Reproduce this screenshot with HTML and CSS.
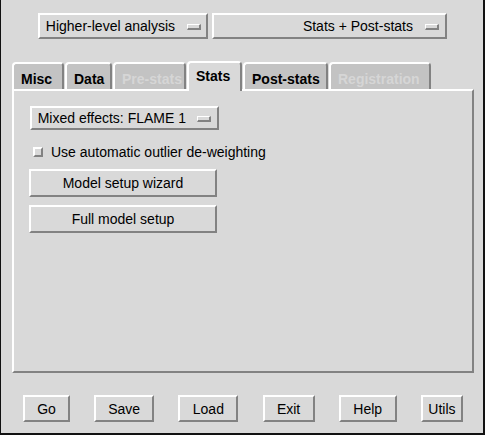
FILE: index.html
```html
<!DOCTYPE html>
<html>
<head>
<meta charset="utf-8">
<link rel="stylesheet" href="styles.css">
</head>
<body>
<div class="window">
  <div class="topbar">
    <div class="menubtn mb-level"><span class="mb-text">Higher-level analysis</span><span class="ind"></span></div>
    <div class="menubtn mb-mode"><span class="mb-text">Stats + Post-stats</span><span class="ind"></span></div>
  </div>
  <div class="tabs">
    <div class="tab t-misc">Misc</div>
    <div class="tab t-data">Data</div>
    <div class="tab t-pre disabled">Pre-stats</div>
    <div class="tab t-stats selected">Stats</div>
    <div class="tab t-post">Post-stats</div>
    <div class="tab t-reg disabled">Registration</div>
  </div>
  <div class="panel">
    <div class="menubtn mb-mixed"><span class="mb-text">Mixed effects: FLAME 1</span><span class="ind"></span></div>
    <div class="check"><span class="box"></span><span class="check-label">Use automatic outlier de-weighting</span></div>
    <div class="btn wide first">Model setup wizard</div>
    <div class="btn wide second">Full model setup</div>
  </div>
  <div class="actions">
    <div class="btn b-go">Go</div>
    <div class="btn b-save">Save</div>
    <div class="btn b-load">Load</div>
    <div class="btn b-exit">Exit</div>
    <div class="btn b-help">Help</div>
    <div class="btn b-utils">Utils</div>
  </div>
</div>
</body>
</html>
```

FILE: styles.css
```css
* {
  box-sizing: border-box;
}

html, body {
  margin: 0;
  padding: 0;
  background: #d9d9d9;
}

.window {
  width: 485px;
  height: 435px;
  background: #d9d9d9;
  border-left: 1px solid #111;
  border-right: 2px solid #111;
  border-bottom: 2px solid #111;
  font-family: "Liberation Sans", Arial, sans-serif;
  font-size: 14px;
  color: #000;
  display: flex;
  flex-direction: column;
}

/* raised 3D widgets */
.menubtn, .btn {
  border-top: 2px solid #ffffff;
  border-left: 2px solid #ffffff;
  border-right: 2px solid #828282;
  border-bottom: 2px solid #828282;
  background: #d9d9d9;
  white-space: nowrap;
  line-height: 16px;
}

.topbar {
  display: flex;
  gap: 4px;
  padding-top: 13px;
  padding-left: 37px;
}

.menubtn {
  display: flex;
  align-items: center;
  justify-content: flex-end;
  gap: 12px;
  padding-right: 5px;
}

.mb-level {
  width: 170px;
  height: 26px;
}

.mb-mode {
  width: 235px;
  height: 26px;
  padding-right: 6px;
}

.ind {
  display: block;
  width: 14px;
  height: 6px;
  border-top: 1px solid #ffffff;
  border-left: 1px solid #ffffff;
  border-right: 2px solid #828282;
  border-bottom: 2px solid #828282;
  background: #d9d9d9;
  margin-top: 1px;
}

/* notebook tabs */
.tabs {
  display: flex;
  align-items: flex-end;
  gap: 1px;
  margin-top: 22px;
  padding-left: 11px;
  height: 28px;
}

.tab {
  height: 27px;
  padding-left: 7px;
  padding-top: 7px;
  background: #c3c3c3;
  border-top: 2px solid #ffffff;
  border-left: 2px solid #ffffff;
  border-right: 2px solid #828282;
  border-radius: 4px 4px 0 0;
  font-weight: bold;
  line-height: 16px;
  white-space: nowrap;
  overflow: hidden;
}

.tab.disabled {
  color: #d6d6d6;
}

.tab.selected {
  height: 30px;
  padding-top: 5px;
  background: #d9d9d9;
  margin-bottom: -2px;
  position: relative;
  z-index: 1;
}

.t-misc { width: 52px; }
.t-data { width: 47px; }
.t-pre { width: 73px; }
.t-stats { width: 55px; }
.t-post { width: 85px; }
.t-reg { width: 102px; }

/* panel */
.panel {
  margin-left: 11px;
  width: 462px;
  height: 284px;
  border-top: 2px solid #ffffff;
  border-left: 2px solid #ffffff;
  border-right: 2px solid #828282;
  border-bottom: 2px solid #828282;
  padding-top: 15px;
  padding-left: 16px;
  display: flex;
  flex-direction: column;
  align-items: flex-start;
}

.mb-mixed {
  width: 189px;
  height: 24px;
  gap: 11px;
  padding-right: 6px;
}

.check {
  display: flex;
  align-items: center;
  gap: 8px;
  margin-top: 14px;
  height: 16px;
  padding-left: 3px;
  line-height: 16px;
  white-space: nowrap;
}

.box {
  display: block;
  width: 10px;
  height: 10px;
  border-top: 2px solid #ffffff;
  border-left: 2px solid #ffffff;
  border-right: 2px solid #828282;
  border-bottom: 2px solid #828282;
  background: #d9d9d9;
}

.btn {
  display: flex;
  align-items: center;
  justify-content: center;
}

.wide {
  width: 188px;
  height: 28px;
  margin-left: -1px;
}

.wide.first {
  margin-top: 9px;
}

.wide.second {
  margin-top: 8px;
}

/* bottom action buttons */
.actions {
  display: flex;
  justify-content: space-between;
  margin-top: 22px;
  padding-left: 22px;
  padding-right: 20px;
}

.actions .btn {
  height: 27px;
}

.b-go { width: 47px; }
.b-save { width: 60px; }
.b-load { width: 60px; }
.b-exit { width: 52px; }
.b-help { width: 58px; }
.b-utils { width: 42px; }
```
